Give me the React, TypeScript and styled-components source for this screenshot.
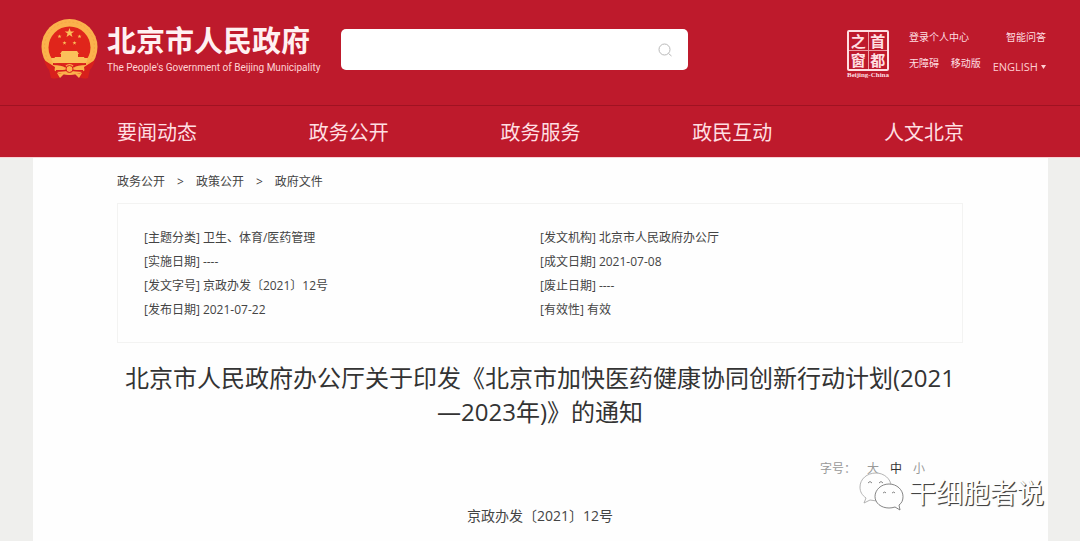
import React, { useState } from "react";
import styled, { createGlobalStyle } from "styled-components";

const GlobalStyle = createGlobalStyle`
  *, *::before, *::after { box-sizing: border-box; }
  body {
    margin: 0;
    background: #efefed;
    color: #444;
    font: 12px/24px "Open Sans", "Noto Sans CJK SC", sans-serif;
  }
  a { color: inherit; text-decoration: none; }
  button, input { font: inherit; color: inherit; }
`;

const Page = styled.div`
  display: flex;
  flex-direction: column;
  min-height: 100vh;
`;

const Header = styled.header`
  background: #be1a2c;
  color: #ffdfe2;
`;

const TopBar = styled.div`
  display: flex;
  align-items: flex-start;
  min-height: 105px;
  padding: 18px 34px 0 41px;
`;

const Brand = styled.a`
  display: flex;
  flex: none;
  gap: 9px;
  width: 300px;
`;

const BrandText = styled.div`
  padding-top: 4px;
  white-space: nowrap;
`;

const BrandName = styled.div`
  font-size: 29px;
  font-weight: 700;
  line-height: 38px;
  color: #fff0f1;
`;

const BrandSub = styled.div`
  font: 10px/16px Roboto, "Open Sans", sans-serif;
  color: #ffd3d5;
`;

const Search = styled.form`
  display: flex;
  align-items: center;
  flex: 0 1 347px;
  height: 41px;
  margin-top: 11px;
  background: #fff;
  border-radius: 5px;
`;

const SearchInput = styled.input`
  flex: 1;
  min-width: 0;
  height: 100%;
  padding: 0 12px;
  border: 0;
  background: none;
  outline: none;
  color: #444;
`;

const SearchButton = styled.button`
  display: flex;
  padding: 0;
  margin-right: 15px;
  border: 0;
  background: none;
  color: #b9b9b9;
`;

const Tools = styled.div`
  display: flex;
  flex: none;
  gap: 18px;
  margin-left: auto;
  padding-top: 7px;
`;

const Seal = styled.a`
  display: flex;
  flex-direction: column;
  align-items: center;
  width: 46px;
  margin-top: 5px;
`;

const SealGrid = styled.span`
  display: grid;
  grid-template-columns: 1fr 1fr;
  gap: 1px;
  width: 42px;
  height: 41px;
  border: 2px solid #ffdfe2;
  border-radius: 2px;
  background: #ee9da5;
`;

const SealChar = styled.span`
  display: flex;
  align-items: center;
  justify-content: center;
  background: #be1a2c;
  font-size: 15px;
  font-weight: 700;
  line-height: 16px;
`;

const SealCaption = styled.span`
  font: 700 7px/8px "Liberation Serif", serif;
`;

const ToolLinks = styled.nav`
  display: flex;
  flex-direction: column;
  gap: 2px;
  width: 137px;
  font-size: 10px;
`;

const ToolRow = styled.div`
  display: flex;
  justify-content: space-between;
`;

const Language = styled.button`
  display: flex;
  align-items: center;
  gap: 3px;
  padding: 6px 0 0;
  border: 0;
  background: none;
  font-size: 11px;
  line-height: 20px;
  color: #ffcfd3;
`;

const MainNav = styled.nav`
  display: flex;
  justify-content: space-between;
  padding: 2px 116px 0 117px;
  border-top: 1px solid #a01222;
  border-bottom: 1px solid #f8d3d6;
  font-size: 20px;
  line-height: 49px;
`;

const Sheet = styled.main`
  flex: 1;
  margin: 0 32px 0 33px;
  padding: 12px 85px 10px 84px;
  background: #fefefe;
`;

const Breadcrumb = styled.nav`
  display: flex;
  gap: 12px;
`;

const MetaBox = styled.section`
  margin-top: 9px;
  padding: 22px 26px 20px;
  border: 1px solid #f3f3f2;
`;

const MetaGrid = styled.dl`
  display: grid;
  grid-template-columns: 1fr 1fr;
  margin: 0;
`;

const MetaItem = styled.div`
  display: flex;
  gap: 3px;
  dd { margin: 0; }
`;

const Title = styled.h1`
  margin: 18px 0 28px;
  font-size: 24px;
  font-weight: 400;
  line-height: 34px;
  text-align: center;
  color: #333;
`;

const FontSizeRow = styled.div`
  position: relative;
  display: flex;
  justify-content: flex-end;
  gap: 11px;
  padding-right: 38px;
  color: #999;
`;

const SizeButton = styled.button<{ $active: boolean }>`
  padding: 0;
  border: 0;
  background: none;
  color: ${(p) => (p.$active ? "#333" : "#999")};
`;

const DocNumber = styled.p`
  margin: 23px 0 0;
  font-size: 14px;
  text-align: center;
`;

const Watermark = styled.div`
  position: absolute;
  top: 13px;
  right: -81px;
  display: flex;
  align-items: center;
  gap: 4px;
  font-size: 27px;
  font-weight: 400;
  line-height: 28px;
  color: #fff;
  text-shadow: 1px 1px 0 #444, 1px 1px 1px #666;
  pointer-events: none;
`;

const WatermarkText = styled.span`
  padding-top: 2px;
`;

const navItems = ["要闻动态", "政务公开", "政务服务", "政民互动", "人文北京"];
const crumbs = ["政务公开", "政策公开", "政府文件"];
const sizes = ["大", "中", "小"];
const meta: [string, string][] = [
  ["主题分类", "卫生、体育/医药管理"],
  ["发文机构", "北京市人民政府办公厅"],
  ["实施日期", "----"],
  ["成文日期", "2021-07-08"],
  ["发文字号", "京政办发〔2021〕12号"],
  ["废止日期", "----"],
  ["发布日期", "2021-07-22"],
  ["有效性", "有效"],
];

const STAR = "M0-5 1.2-1.6 4.8-1.6 1.9.6 3 4 0 1.9-3 4-1.9.6-4.8-1.6-1.2-1.6Z";

function Emblem() {
  return (
    <svg width="57" height="62" viewBox="0 0 57 62" aria-hidden="true">
      <path d="M6 43 L10 60 Q18 62 22 56 L35 56 Q40 62 47 60 L51 43Z" fill="#d8201c" />
      <circle cx="28.500" cy="29" r="28" fill="#fbb24c" />
      <circle cx="28.500" cy="29" r="25" fill="none" stroke="#f7a543" strokeDasharray="2 2" />
      <circle cx="28.500" cy="29.500" r="21" fill="#e0251b" />
      <g fill="#fbc05a">
        <path d={STAR} transform="translate(28.5 15)" />
        <path d={STAR} transform="translate(18.500 18.500) scale(.42)" />
        <path d={STAR} transform="translate(38.500 18.500) scale(.42)" />
        <path d={STAR} transform="translate(23.500 25) scale(.42)" />
        <path d={STAR} transform="translate(33.500 25) scale(.42)" />
        <path d="M21 33h15l2 3H19zM20 36h17v3h6l2 4H12l2-4h6z" />
        <path d="M10 40h37l-2 5H12z" />
      </g>
      <path d="M12 46 Q20 45 24 48 Q28.500 44 33 48 Q37 45 45 46 L41 54 Q28 60 16 54Z" fill="#fbb24c" />
      <path d="M12 46q9 0 13 3M45 46q-9 0-13 3M15 53q8 0 11-1M42 53q-8 0-11-1" stroke="#d8201c" strokeWidth="1.800" fill="none" />
      <circle cx="28.500" cy="51" r="3.500" fill="#fbb24c" stroke="#d8201c" />
      <path d="M3 42q2 9 10 14l1-7zM54 42q-2 9-10 14l-1-7z" fill="#d8201c" />
      <path d="M16 55l3 5 4-4zM41 55l-3 5-4-4z" fill="#fbb24c" />
    </svg>
  );
}

function SearchIcon() {
  return (
    <svg width="16" height="16" viewBox="0 0 16 16" fill="none" stroke="currentColor" aria-hidden="true">
      <circle cx="7.500" cy="7.500" r="5.500" />
      <path d="M11.500 11.500 14.500 14" />
    </svg>
  );
}

function ChatBubbles() {
  return (
    <svg width="47" height="44" viewBox="0 0 47 44" fill="#fefefe" stroke="#777" strokeWidth=".9" aria-hidden="true">
      <path stroke="#aaa" d="M18 3C9 3 2 9 2 17c0 5 2 8 6 11l-2 5 6-3q5 1 10 1C29 30 33 23 33 16 33 9 26 3 18 3Z" />
      <path d="M31 14C23 14 17 20 17 26.500S23 38 31 38q3 0 6-1l5 3-1-5c3-2 4-5 4-8.500C45 20 39 14 31 14Z" />
      <path fill="none" d="M10 13q2-3 4 0M21 13q2-3 4 0M25 23q2-2 3 0M34 23q2-2 3 0" />
    </svg>
  );
}

export default function App() {
  const [size, setSize] = useState("中");
  return (
    <Page>
      <GlobalStyle />
      <Header>
        <TopBar>
          <Brand href="#">
            <Emblem />
            <BrandText>
              <BrandName>北京市人民政府</BrandName>
              <BrandSub>The People's Government of Beijing Municipality</BrandSub>
            </BrandText>
          </Brand>
          <Search role="search" onSubmit={(e) => e.preventDefault()}>
            <SearchInput type="text" aria-label="搜索" />
            <SearchButton type="submit" aria-label="搜索">
              <SearchIcon />
            </SearchButton>
          </Search>
          <Tools>
            <Seal href="#">
              <SealGrid>
                {["之", "首", "窗", "都"].map((c) => (
                  <SealChar key={c}>{c}</SealChar>
                ))}
              </SealGrid>
              <SealCaption>Beijing-China</SealCaption>
            </Seal>
            <ToolLinks>
              <ToolRow>
                <a href="#">登录个人中心</a>
                <a href="#">智能问答</a>
              </ToolRow>
              <ToolRow>
                <a href="#">无障碍</a>
                <a href="#">移动版</a>
                <Language type="button">
                  ENGLISH
                  <svg width="5" height="4" viewBox="0 0 5 4" fill="currentColor" aria-hidden="true">
                    <path d="M0 0h5L2.500 4z" />
                  </svg>
                </Language>
              </ToolRow>
            </ToolLinks>
          </Tools>
        </TopBar>
        <MainNav>
          {navItems.map((item) => (
            <a key={item} href="#">{item}</a>
          ))}
        </MainNav>
      </Header>
      <Sheet>
        <Breadcrumb>
          {crumbs.map((c, i) => (
            <React.Fragment key={c}>
              {i > 0 && <span>&gt;</span>}
              <a href="#">{c}</a>
            </React.Fragment>
          ))}
        </Breadcrumb>
        <MetaBox>
          <MetaGrid>
            {meta.map(([label, value]) => (
              <MetaItem key={label}>
                <dt>[{label}]</dt>
                <dd>{value}</dd>
              </MetaItem>
            ))}
          </MetaGrid>
        </MetaBox>
        <Title>北京市人民政府办公厅关于印发《北京市加快医药健康协同创新行动计划(2021—2023年)》的通知</Title>
        <FontSizeRow>
          <span>字号：</span>
          {sizes.map((s) => (
            <SizeButton key={s} type="button" $active={s === size} onClick={() => setSize(s)}>
              {s}
            </SizeButton>
          ))}
          <Watermark>
            <ChatBubbles />
            <WatermarkText>干细胞者说</WatermarkText>
          </Watermark>
        </FontSizeRow>
        <DocNumber>京政办发〔2021〕12号</DocNumber>
      </Sheet>
    </Page>
  );
}
